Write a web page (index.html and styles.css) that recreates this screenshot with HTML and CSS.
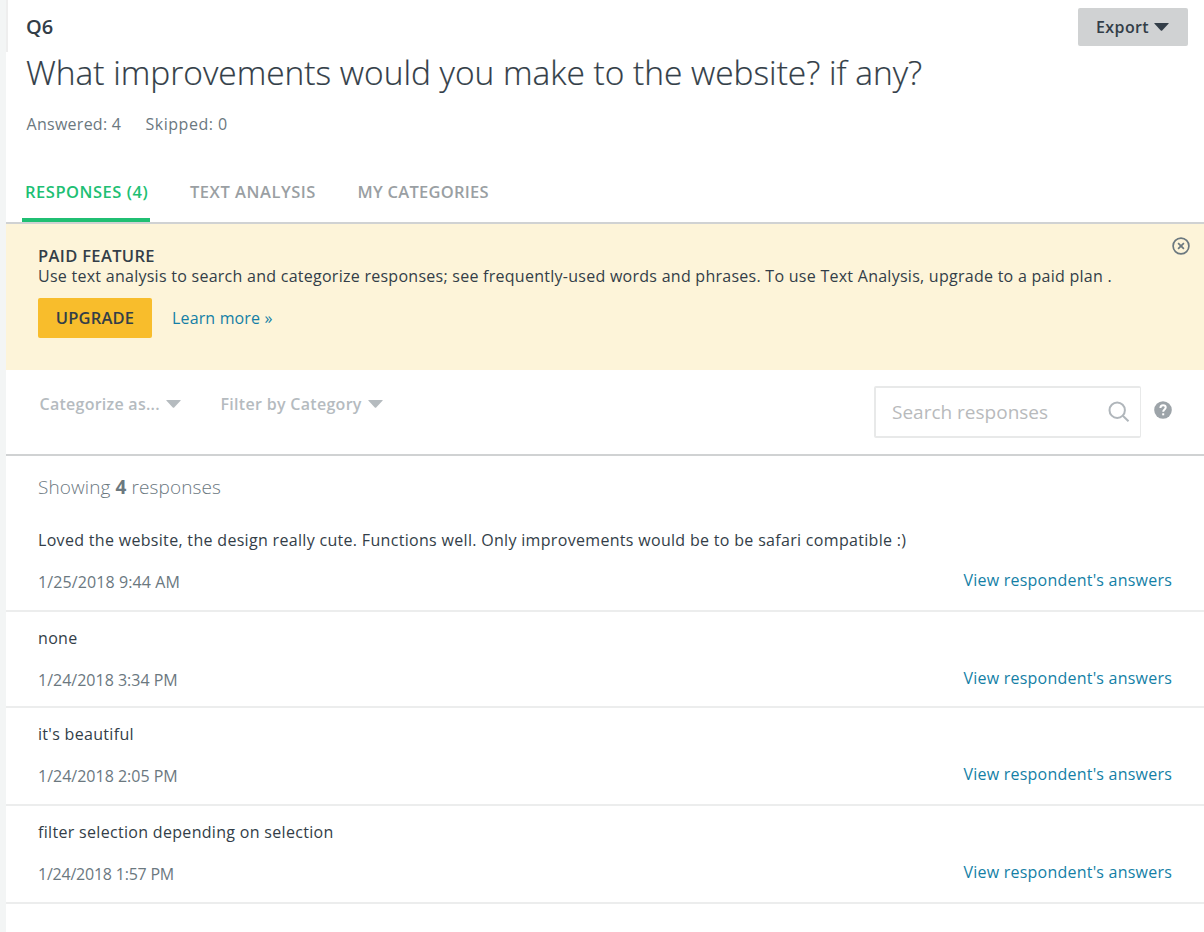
FILE: index.html
```
<!DOCTYPE html>
<html lang="en">
<head>
<meta charset="utf-8">
<title>Q6 responses</title>
<link rel="stylesheet" href="styles.css">
</head>
<body>
<div class="page">
  <header class="question">
    <div class="question-main">
      <div class="question-number">Q6</div>
      <h1 class="question-title">What improvements would you make to the website? if any?</h1>
      <div class="question-stats"><span class="answered">Answered: 4</span><span class="skipped">Skipped: 0</span></div>
    </div>
    <button class="export"><span>Export</span><svg class="caret" width="15" height="8" viewBox="0 0 15 8"><path d="M.8 0h13.4q.9 0 .3.7L8.2 7.4q-.7.7-1.4 0L.5.7Q-.1 0 .8 0z"/></svg></button>
  </header>
  <nav class="tabs">
    <a class="tab tab-responses">RESPONSES (4)</a>
    <a class="tab tab-analysis">TEXT ANALYSIS</a>
    <a class="tab tab-categories">MY CATEGORIES</a>
  </nav>
  <section class="banner">
    <div class="banner-body">
      <div class="banner-title">PAID FEATURE</div>
      <div class="banner-text">Use text analysis to search and categorize responses; see frequently-used words and phrases. To use Text Analysis, upgrade to a paid plan .</div>
      <div class="banner-actions"><button class="upgrade">UPGRADE</button><a class="learn">Learn more »</a></div>
    </div>
    <svg class="close" width="18" height="18" viewBox="0 0 18 18"><circle cx="9" cy="9" r="7.9"/><path d="M6.1 6.1l5.8 5.8M11.9 6.1l-5.8 5.8"/></svg>
  </section>
  <div class="toolbar">
    <div class="menu menu-categorize"><span>Categorize as...</span><svg class="caret" width="15" height="8" viewBox="0 0 15 8"><path d="M.8 0h13.4q.9 0 .3.7L8.2 7.4q-.7.7-1.4 0L.5.7Q-.1 0 .8 0z"/></svg></div>
    <div class="menu menu-filter"><span>Filter by Category</span><svg class="caret" width="15" height="8" viewBox="0 0 15 8"><path d="M.8 0h13.4q.9 0 .3.7L8.2 7.4q-.7.7-1.4 0L.5.7Q-.1 0 .8 0z"/></svg></div>
    <div class="search"><span>Search responses</span><svg class="glass" width="22" height="22" viewBox="0 0 22 22"><circle cx="9.2" cy="9.2" r="7.7"/><path d="M14.8 14.8l5.7 5.4"/></svg></div>
    <svg class="help" width="18" height="18" viewBox="0 0 18 18"><circle cx="9" cy="9" r="8.8"/><path d="M6.4 7.1C6.4 5.3 7.5 4.3 9.1 4.3c1.6 0 2.6.9 2.6 2.3 0 1.9-2.5 2-2.5 4.2"/><rect x="8.2" y="12.3" width="2" height="2"/></svg>
  </div>
  <div class="showing">Showing <b>4</b> responses</div>
  <ul class="responses">
    <li class="response">
      <div class="response-text">Loved the website, the design really cute. Functions well. Only improvements would be to be safari compatible :)</div>
      <div class="response-meta"><span class="date">1/25/2018 9:44 AM</span><a class="view">View respondent's answers</a></div>
    </li>
    <li class="response compact">
      <div class="response-text">none</div>
      <div class="response-meta"><span class="date date-tight">1/24/2018 3:34 PM</span><a class="view">View respondent's answers</a></div>
    </li>
    <li class="response">
      <div class="response-text">it's beautiful</div>
      <div class="response-meta"><span class="date date-tight">1/24/2018 2:05 PM</span><a class="view">View respondent's answers</a></div>
    </li>
    <li class="response">
      <div class="response-text">filter selection depending on selection</div>
      <div class="response-meta"><span class="date date-tighter">1/24/2018 1:57 PM</span><a class="view">View respondent's answers</a></div>
    </li>
  </ul>
</div>
</body>
</html>
```
FILE: styles.css
```
* { box-sizing: border-box; }
body {
  margin: 0;
  background: #f3f5f5;
  color: #333e48;
  font: 400 16px/20px "Open Sans", "Noto Sans", sans-serif;
}
.page { margin-left: 6px; height: 932px; background: #fff; white-space: nowrap; overflow: hidden; }
button { border: 0; padding: 0; font: inherit; color: inherit; }

.question {
  display: flex;
  justify-content: space-between;
  align-items: flex-start;
  height: 182px;
  padding: 8px 16px 0 20px;
  background: linear-gradient(#eeeeee, #eeeeee) left top / 2px 52px no-repeat;
}
.question-main { padding-top: 7px; }
.question-number { font-size: 20px; line-height: 24px; font-weight: 600; letter-spacing: -.1px; }
.question-title { margin: 11px 0 20px; font-size: 33.5px; line-height: 44px; font-weight: 300; letter-spacing: -.02px; -webkit-text-stroke: .2px currentColor; }
.question-stats { display: flex; padding-left: .6px; color: #6b787f; }
.answered { width: 119px; letter-spacing: .26px; }
.skipped { letter-spacing: .5px; }
.export {
  display: flex;
  align-items: center;
  justify-content: space-between;
  width: 110px;
  height: 38px;
  padding: 0 19px 1px 18px;
  border-radius: 2px;
  background: #d0d2d3;
  font-weight: 600;
  letter-spacing: .4px;
}
.caret { display: block; fill: currentColor; }

.tabs {
  display: flex;
  height: 42px;
  padding-left: 16px;
  border-bottom: 2px solid #d0d2d3;
  color: #9a9fa3;
  font-size: 16.5px;
  font-weight: 600;
}
.tab { height: 40px; }
.tab-responses { width: 128px; padding-left: 3px; border-bottom: 4px solid #20bf73; color: #20bf73; letter-spacing: .52px; }
.tab-analysis { margin-left: 40px; width: 128px; letter-spacing: .53px; }
.tab-categories { margin-left: 39.5px; letter-spacing: .26px; }

.banner {
  display: flex;
  justify-content: space-between;
  height: 146px;
  padding: 22px 14px 0 32px;
  background: #fdf4d9;
}
.banner-title { font-size: 16.5px; font-weight: 600; letter-spacing: .35px; }
.banner-text { letter-spacing: .265px; }
.banner-actions { display: flex; align-items: center; margin-top: 12px; }
.upgrade { width: 114px; height: 40px; border-radius: 2px; background: #f8bd2c; font-size: 16.5px; font-weight: 600; letter-spacing: .2px; }
.learn { margin-left: 20px; letter-spacing: .15px; }
.learn, .view { color: #147fa6; }
.close { margin-top: -9px; fill: none; stroke: #6b787f; stroke-width: 1.7; }

.toolbar {
  display: flex;
  height: 86px;
  padding: 16px 32px 0 33.5px;
  border-bottom: 2px solid #d0d2d3;
}
.menu { display: flex; align-items: center; justify-content: space-between; height: 20px; margin-top: 8px; color: #b5bbbf; font-weight: 600; }
.menu-categorize { width: 141px; letter-spacing: .26px; }
.menu-filter { width: 162px; margin-left: 40px; letter-spacing: .3px; }
.search {
  display: flex;
  align-items: center;
  justify-content: space-between;
  width: 267px;
  height: 52px;
  margin-left: auto;
  padding: 0 10px 1px 16px;
  border: 2px solid #e8e9e9;
  border-right-width: 1px;
  border-radius: 2px;
  color: #b8babc;
  font-size: 19px;
  font-weight: 400;
  letter-spacing: 0;
}
.glass { fill: none; stroke: #b0b6bb; stroke-width: 2; }
.help { margin: 15px 0 0 13px; fill: #9da4a9; }
.help path { fill: none; stroke: #fff; stroke-width: 2; }
.help rect { fill: #fff; }

.showing { padding: 19px 0 0 32px; color: #6b787f; font-size: 19px; line-height: 24px; font-weight: 300; letter-spacing: .1px; }
.showing b { font-weight: 700; }

.responses { margin: 15px 0 0; padding: 0; list-style: none; }
.response { height: 98px; padding: 16px 32px 0; border-bottom: 2px solid #eceded; }
.response.compact { height: 96px; }
.response-text { letter-spacing: .315px; }
.response-meta { display: flex; justify-content: space-between; align-items: flex-start; margin-top: 20px; }
.date { margin-top: 2px; color: #6b787f; letter-spacing: .1px; }
.date-tight { letter-spacing: 0; }
.date-tighter { letter-spacing: -.22px; }
.view { letter-spacing: .22px; }
```
